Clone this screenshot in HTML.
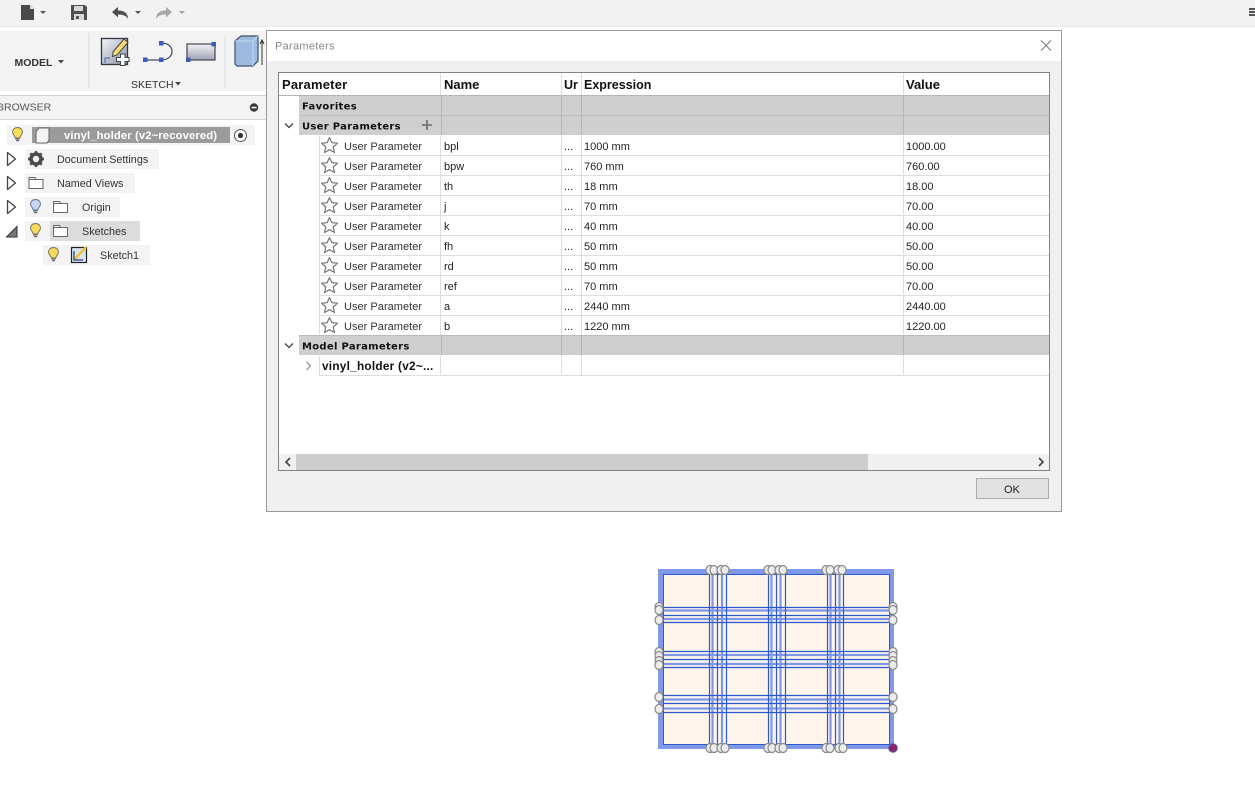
<!DOCTYPE html>
<html><head><meta charset="utf-8"><title>Parameters</title>
<style>
html,body{margin:0;padding:0;background:#fff;width:1255px;height:807px;overflow:hidden}
svg{display:block}
text{font-family:"Liberation Sans",sans-serif;font-size:11px;fill:#222}
.h{font-size:13px;font-weight:bold;fill:#111;letter-spacing:0}
.s{font-family:"DejaVu Sans",sans-serif;font-size:10px;font-weight:bold;fill:#111;letter-spacing:.3px}
.b{font-size:10.8px;fill:#333}
.u{fill:#333;font-size:11px;letter-spacing:.03px}
</style></head><body>
<svg width="1255" height="807" viewBox="0 0 1255 807" xmlns="http://www.w3.org/2000/svg">
<defs>
<g id="star"><path d="M0-7.5 2.3-2.4 8-1.8 3.7 2 5 7.500 0 4.700-5 7.500-3.700 2-8-1.800-2.300-2.400Z" fill="#fff" stroke="#777" stroke-width="1.2" stroke-linejoin="round"/></g>
<g id="bulb"><path d="M0-6.500C-3.200-6.500-5-4.200-5-2-5 .5-2.600 1.500-2.200 4H2.200C2.600 1.500 5 .5 5-2 5-4.200 3.200-6.500 0-6.500Z" fill="#f6dc5a" stroke="#77755a" stroke-width="1"/><path d="M-2 5H2M-1.400 6.600H1.400" stroke="#666" stroke-width="1.200"/></g>
<g id="bulbb"><path d="M0-6.500C-3.200-6.500-5-4.200-5-2-5 .5-2.600 1.500-2.200 4H2.200C2.600 1.500 5 .5 5-2 5-4.200 3.200-6.500 0-6.500Z" fill="#c5d6f2" stroke="#68748c" stroke-width="1"/><path d="M-2 5H2M-1.400 6.600H1.400" stroke="#666" stroke-width="1.200"/></g>
<g id="folder"><path d="M-7-5.500H-1L0-3.500H7V5.500H-7Z" fill="#fff" stroke="#666" stroke-width="1"/><path d="M-7-3.500H0" stroke="#666" fill="none"/></g>
<g id="tri"><path d="M-4-6.500 4 0-4 6.500Z" fill="#fff" stroke="#444" stroke-width="1.300" stroke-linejoin="round"/></g>
<g id="c"><ellipse rx="4" ry="4.500" fill="#ececec" stroke="#8a8a8a" stroke-width="1.200"/></g>
<linearGradient id="g" x1="0" y1="0" x2="0" y2="1"><stop offset="0" stop-color="#f4f4f6"/><stop offset="1" stop-color="#9ea3b4"/></linearGradient>
<linearGradient id="g2" x1="0" y1="0" x2="1" y2="1"><stop offset="0" stop-color="#f4f5f8"/><stop offset="1" stop-color="#8c92a6"/></linearGradient>
</defs>

<!-- top bar -->
<rect x="0" y="0" width="1255" height="26" fill="#f2f2f2"/>
<rect x="0" y="26" width="1255" height="1" fill="#e8e8e8"/>
<path d="M21 5H30L34 9V20H21Z" fill="#4a4a4a"/><path d="M30 5V9H34" fill="#ddd"/>
<path d="M40 11H46L43 14Z" fill="#555"/>
<path d="M71 5H85L87 7V20H71Z" fill="#4f4f4f"/><rect x="74" y="6" width="9" height="5" fill="#d8d8d8"/><rect x="74" y="14" width="10" height="6" fill="#d8d8d8"/><rect x="76" y="16" width="3" height="3" fill="#555"/>
<path d="M112 12 118 7V10.500C124 10.500 128 13 128 19 126 15.500 123 14.500 118 14.500V17.500Z" fill="#4f4f4f"/>
<path d="M135 11H141L138 14Z" fill="#555"/>
<path d="M172 12 166 7V10.500C160 10.500 156 13 156 19 158 15.500 161 14.500 166 14.500V17.500Z" fill="#a8a8a8"/>
<path d="M179 11H185L182 14Z" fill="#a5a5a5"/>
<path d="M1249 8H1255V10H1249ZM1249 11H1255V13H1249ZM1249 14H1255V16H1249Z" fill="#555"/>

<!-- ribbon -->
<rect x="0" y="31" width="266" height="60" fill="#f3f3f3"/>
<rect x="88" y="33" width="2" height="55" fill="#e6e6e6"/>
<rect x="224" y="36" width="2" height="52" fill="#e8e8e8"/>
<text x="14.500" y="66" style="font-size:10.500px;font-weight:bold;fill:#333">MODEL</text>
<path d="M58 60H64L61 63.500Z" fill="#444"/>
<rect x="101.500" y="38.500" width="26" height="26" fill="url(#g2)" stroke="#2f3440" stroke-width="1.300"/>
<path d="M105 63V58H110" fill="none" stroke="#3e62c0" stroke-width="1"/>
<path d="M113 52 124 39 128 42.500 117 55 112.500 56.500Z" fill="#f5d878" stroke="#444" stroke-width="1"/>
<path d="M120.500 54H125V57.500H129V61.500H125V65.500H120.500V61.500H116.500V57.500H120.500Z" fill="#fff" stroke="#444" stroke-width="1"/>
<path d="M145 60H161C168 60 172 56 172 51.500 172 46.500 168 43 161 43" fill="none" stroke="#404a60" stroke-width="1.200"/>
<rect x="143" y="57.500" width="4.500" height="4.500" fill="#3c5cb8"/><rect x="159" y="57.500" width="4.500" height="4.500" fill="#3c5cb8"/><rect x="159" y="41" width="4.500" height="4.500" fill="#3c5cb8"/>
<rect x="187" y="44" width="28" height="16" fill="url(#g)" stroke="#444" stroke-width="1.200"/>
<rect x="211.500" y="42" width="4.500" height="4.500" fill="#3c5cb8"/><rect x="186" y="57.500" width="4.500" height="4.500" fill="#3c5cb8"/>
<text x="131" y="88" style="font-size:10.500px;fill:#333">SKETCH</text>
<path d="M175 82H181L178 85.500Z" fill="#444"/>
<path d="M235 41 241 36H258V61L253 66H237L235 64Z" fill="#9dbbdf" stroke="#40506a" stroke-width="1.200"/>
<path d="M253 41V66M235 41H253L258 36" fill="none" stroke="#c5d8ef" stroke-width="1"/>
<path d="M262 65V41M260 44 262 40 264 44" fill="none" stroke="#333" stroke-width="1"/>

<!-- browser header -->
<rect x="0" y="95" width="266" height="1" fill="#cfcfcf"/>
<rect x="0" y="96" width="266" height="23" fill="#f3f3f3"/>
<rect x="0" y="119" width="266" height="1" fill="#d5d5d5"/>
<text x="-3" y="110.500" style="font-size:10.500px;fill:#555">BROWSER</text>
<circle cx="254" cy="107.500" r="4.200" fill="#3a3a3a"/><rect x="251.500" y="106.800" width="5" height="1.500" fill="#fff"/>

<!-- tree -->
<rect x="7" y="125" width="248" height="20" fill="#f3f3f3"/>
<rect x="32" y="127" width="198" height="16" fill="#9b9b9b"/>
<use href="#bulb" x="17.500" y="134"/>
<path d="M36 132 39 128H49V140L47 143H36Z" fill="#f4f4f4" stroke="#666"/>
<text x="64" y="139" style="font-size:11.300px;font-weight:bold;fill:#fff;letter-spacing:.1px">vinyl_holder (v2~recovered)</text>
<circle cx="240.500" cy="135.500" r="6" fill="#fff" stroke="#555" stroke-width="1"/><circle cx="240.500" cy="135.500" r="2.600" fill="#333"/>

<rect x="25" y="149" width="134" height="20" fill="#f3f3f3"/>
<use href="#tri" x="11.500" y="159"/>
<g transform="translate(36 159)"><circle r="5" fill="none" stroke="#4b4b4b" stroke-width="3.600"/><path d="M0-8V-5M0 8V5M-8 0H-5M8 0H5M-5.700-5.700-3.500-3.500M5.700 5.700 3.500 3.500M-5.700 5.700-3.500 3.500M5.700-5.700 3.500-3.500" stroke="#4b4b4b" stroke-width="2.400"/></g>
<text x="57" y="163" class="b">Document Settings</text>

<rect x="25" y="173" width="110" height="20" fill="#f3f3f3"/>
<use href="#tri" x="11.500" y="183"/>
<use href="#folder" x="36" y="183"/>
<text x="57" y="187" class="b">Named Views</text>

<rect x="25" y="197" width="95" height="20" fill="#f3f3f3"/>
<use href="#tri" x="11.500" y="207"/>
<use href="#bulbb" x="35.500" y="206"/>
<use href="#folder" x="60.500" y="207"/>
<text x="82" y="211" class="b">Origin</text>

<rect x="25" y="221" width="25" height="20" fill="#f3f3f3"/>
<rect x="50" y="221" width="90" height="20" fill="#dcdcdc"/>
<path d="M6.500 237 17 226.500V237Z" fill="#777" stroke="#333" stroke-width="1"/>
<use href="#bulb" x="35.500" y="230"/>
<use href="#folder" x="60.500" y="231"/>
<text x="82" y="235" class="b">Sketches</text>

<rect x="43" y="245" width="107" height="20" fill="#f3f3f3"/>
<use href="#bulb" x="53.500" y="254"/>
<rect x="71.500" y="247.500" width="15" height="15" fill="#dbe3f0" stroke="#222" stroke-width="1.200"/>
<path d="M75 259 86 247" stroke="#e9c530" stroke-width="2.500"/><path d="M74 251V260H83" fill="none" stroke="#2d3f78" stroke-width="1.300"/>
<text x="100" y="259" class="b">Sketch1</text>

<!-- dialog -->
<rect x="266.500" y="30.500" width="795" height="481" fill="#f0f0f0" stroke="#9a9a9a"/>
<rect x="267" y="31" width="794" height="30" fill="#fff"/>
<text x="275" y="49.500" style="font-size:11px;fill:#888;letter-spacing:.3px">Parameters</text>
<path d="M1041 40.500 1051 50.500M1051 40.500 1041 50.500" stroke="#777" stroke-width="1" fill="none"/>

<!-- table -->
<rect x="278.500" y="72.500" width="771" height="398" fill="#fff" stroke="#828282"/>
<rect x="299" y="96" width="750" height="39" fill="#cfcfcf"/>
<rect x="299" y="336" width="750" height="19" fill="#cfcfcf"/>
<path d="M279 95.500H1049" stroke="#b5b5b5"/>
<path d="M299 115.500H1049M299 335.500H1049" stroke="#bbb"/>
<path d="M319 155.500H1049M319 175.500H1049M319 195.500H1049M319 215.500H1049M319 235.500H1049M319 255.500H1049M319 275.500H1049M319 295.500H1049M319 315.500H1049M319 375.500H1049" stroke="#dedede"/>
<path d="M319.500 136V335M319.500 356V375" stroke="#dedede"/>
<path d="M440.500 73V95M561.500 73V95M581.500 73V95M903.500 73V95" stroke="#dcdcdc"/>
<path d="M441.500 96V135M561.500 96V135M581.500 96V135M903.500 96V135M441.500 336V355M561.500 336V355M581.500 336V355M903.500 336V355" stroke="#b5b5b5"/>
<path d="M440.500 136V335M561.500 136V335M581.500 136V335M903.500 136V335M440.500 356V375M561.500 356V375M581.500 356V375M903.500 356V375" stroke="#dedede"/>

<text x="282" y="89" class="h" style="letter-spacing:.2px">Parameter</text>
<text x="444" y="89" class="h">Name</text>
<text x="564" y="89" class="h" style="font-size:12.500px">Ur</text>
<text x="584" y="89" class="h" style="font-size:12.500px">Expression</text>
<text x="906" y="89" class="h">Value</text>

<text x="302" y="109.500" class="s">Favorites</text>
<path d="M285 123.500 289 127.500 293 123.500" fill="none" stroke="#444" stroke-width="1.300"/>
<text x="302" y="129.500" class="s">User Parameters</text>
<path d="M427 120V130M422 125H432" stroke="#777" stroke-width="1.800"/>

<use href="#star" x="329.500" y="145"/><text x="344" y="150" class="u">User Parameter</text><text x="444" y="150">bpl</text><text x="564" y="150">...</text><text x="584" y="150">1000 mm</text><text x="906" y="150">1000.00</text>
<use href="#star" x="329.500" y="165"/><text x="344" y="170" class="u">User Parameter</text><text x="444" y="170">bpw</text><text x="564" y="170">...</text><text x="584" y="170">760 mm</text><text x="906" y="170">760.00</text>
<use href="#star" x="329.500" y="185"/><text x="344" y="190" class="u">User Parameter</text><text x="444" y="190">th</text><text x="564" y="190">...</text><text x="584" y="190">18 mm</text><text x="906" y="190">18.00</text>
<use href="#star" x="329.500" y="205"/><text x="344" y="210" class="u">User Parameter</text><text x="444" y="210">j</text><text x="564" y="210">...</text><text x="584" y="210">70 mm</text><text x="906" y="210">70.00</text>
<use href="#star" x="329.500" y="225"/><text x="344" y="230" class="u">User Parameter</text><text x="444" y="230">k</text><text x="564" y="230">...</text><text x="584" y="230">40 mm</text><text x="906" y="230">40.00</text>
<use href="#star" x="329.500" y="245"/><text x="344" y="250" class="u">User Parameter</text><text x="444" y="250">fh</text><text x="564" y="250">...</text><text x="584" y="250">50 mm</text><text x="906" y="250">50.00</text>
<use href="#star" x="329.500" y="265"/><text x="344" y="270" class="u">User Parameter</text><text x="444" y="270">rd</text><text x="564" y="270">...</text><text x="584" y="270">50 mm</text><text x="906" y="270">50.00</text>
<use href="#star" x="329.500" y="285"/><text x="344" y="290" class="u">User Parameter</text><text x="444" y="290">ref</text><text x="564" y="290">...</text><text x="584" y="290">70 mm</text><text x="906" y="290">70.00</text>
<use href="#star" x="329.500" y="305"/><text x="344" y="310" class="u">User Parameter</text><text x="444" y="310">a</text><text x="564" y="310">...</text><text x="584" y="310">2440 mm</text><text x="906" y="310">2440.00</text>
<use href="#star" x="329.500" y="325"/><text x="344" y="330" class="u">User Parameter</text><text x="444" y="330">b</text><text x="564" y="330">...</text><text x="584" y="330">1220 mm</text><text x="906" y="330">1220.00</text>

<path d="M285 343.500 289 347.500 293 343.500" fill="none" stroke="#444" stroke-width="1.300"/>
<text x="302" y="349.500" class="s">Model Parameters</text>
<path d="M306.500 362 310.500 366 306.500 370" fill="none" stroke="#999" stroke-width="1.300"/>
<text x="322" y="370" style="font-size:11.800px;font-weight:bold;fill:#111;letter-spacing:.25px">vinyl_holder (v2~...</text>

<!-- scrollbar -->
<rect x="279" y="454" width="770" height="16" fill="#f0f0f0"/>
<rect x="296" y="454" width="572" height="16" fill="#cdcdcd"/>
<path d="M290 458 286 462 290 466" fill="none" stroke="#444" stroke-width="1.600"/>
<path d="M1039 458 1043 462 1039 466" fill="none" stroke="#444" stroke-width="1.600"/>

<!-- ok -->
<rect x="976.500" y="478.500" width="72" height="20" fill="#e1e1e1" stroke="#adadad"/>
<text x="1004" y="493" style="font-size:11px;fill:#222">OK</text>

<!-- sketch -->
<rect x="659" y="570" width="234" height="178" fill="#fdf5ec"/>
<path d="M712.500 570V748M722 570V748M771.500 570V748M780.500 570V748M830.500 570V748M839.500 570V748M659 610.500H893M659 619H893M659 655H893M659 664H893M659 699.500H893M659 708.500H893" stroke="#7f99e8" stroke-width="2.200" fill="none"/>
<path d="M709.500 570V748M717.500 570V748M726.500 570V748M768.500 570V748M776.500 570V748M785.500 570V748M827.500 570V748M835.500 570V748M843.500 570V748M659 607.500H893M659 615.500H893M659 622.500H893M659 651.500H893M659 659.500H893M659 667.500H893M659 695.500H893M659 703.500H893M659 712.500H893" stroke="#2a58d0" stroke-width="1.200" fill="none"/>
<path d="M660.500 571.500H891.500V746.500H660.500Z" fill="none" stroke="#7f99e8" stroke-width="5"/>
<path d="M663.500 574.500H889.500V744.500H663.500Z" fill="none" stroke="#2a58d0" stroke-width="1"/>
<use href="#c" x="710" y="570"/><use href="#c" x="714" y="570"/><use href="#c" x="721" y="570"/><use href="#c" x="725" y="570"/>
<use href="#c" x="768" y="570"/><use href="#c" x="772" y="570"/><use href="#c" x="779" y="570"/><use href="#c" x="783" y="570"/>
<use href="#c" x="826" y="570"/><use href="#c" x="830" y="570"/><use href="#c" x="838" y="570"/><use href="#c" x="842" y="570"/>
<use href="#c" x="710" y="748"/><use href="#c" x="714" y="748"/><use href="#c" x="721" y="748"/><use href="#c" x="725" y="748"/>
<use href="#c" x="768" y="748"/><use href="#c" x="772" y="748"/><use href="#c" x="779" y="748"/><use href="#c" x="783" y="748"/>
<use href="#c" x="826" y="748"/><use href="#c" x="830" y="748"/><use href="#c" x="839" y="748"/><use href="#c" x="843" y="748"/>
<use href="#c" x="659" y="607"/><use href="#c" x="659" y="610"/><use href="#c" x="659" y="620"/><use href="#c" x="659" y="652"/><use href="#c" x="659" y="656"/><use href="#c" x="659" y="661"/><use href="#c" x="659" y="665"/><use href="#c" x="659" y="697"/><use href="#c" x="659" y="709"/>
<use href="#c" x="893" y="607"/><use href="#c" x="893" y="610"/><use href="#c" x="893" y="620"/><use href="#c" x="893" y="652"/><use href="#c" x="893" y="656"/><use href="#c" x="893" y="661"/><use href="#c" x="893" y="665"/><use href="#c" x="893" y="697"/><use href="#c" x="893" y="709"/>
<circle cx="893" cy="748" r="4.300" fill="#8e1e6e" stroke="#5a5fa0" stroke-width="1"/>
</svg>
</body></html>
